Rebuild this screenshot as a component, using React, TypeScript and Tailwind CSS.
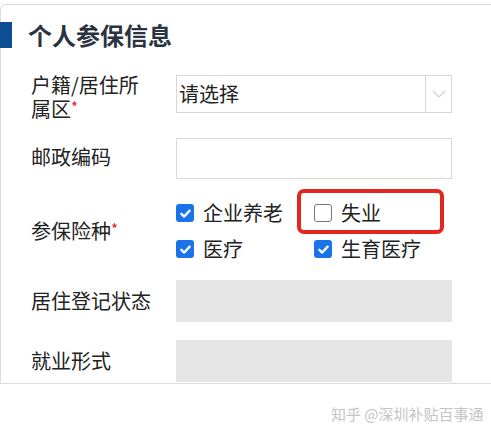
import React from "react";

const font = { fontFamily: '"Noto Sans CJK SC", "Noto Sans", sans-serif' };

const insurance = [
  { label: "企业养老", checked: true },
  { label: "失业", checked: false },
  { label: "医疗", checked: true },
  { label: "生育医疗", checked: true },
];

function Check({ checked }: { checked: boolean }) {
  if (!checked) {
    return <span className="w-[18px] h-[18px] rounded-[3px] border border-[#767676] bg-white shrink-0" />;
  }
  return (
    <span className="w-[18px] h-[18px] rounded-[3px] bg-[#1a73e8] flex items-center justify-center shrink-0">
      <svg width="13" height="13" viewBox="0 0 12 12" fill="none">
        <path d="M2.2 6.3 L4.8 8.8 L9.8 3.4" stroke="white" strokeWidth="2.2" strokeLinecap="round" strokeLinejoin="round" />
      </svg>
    </span>
  );
}

function Req() {
  return <span className="text-[#e02020] text-[15px] leading-[15px] self-start mt-[2px]">*</span>;
}

export default function App() {
  return (
    <div className="relative w-[491px] h-[438px] bg-white overflow-hidden text-[#222]" style={font}>
      <div className="mt-[4px] ml-0 w-[520px] border-l border-t border-b border-[#dcdcdc] rounded-tl-[6px] pb-[1px]">
        {/* title */}
        <div className="flex items-center mt-[17px] h-[26px]">
          <div className="w-[12px] h-[26px] bg-[#0d4d94] -ml-px" />
          <h2 className="ml-[16px] text-[24px] leading-[26px] font-bold text-[#2b3340]">个人参保信息</h2>
        </div>

        <div className="flex flex-col text-[20px]">
          {/* row 1 */}
          <div className="flex items-start mt-[25px]">
            <div className="w-[175px] pl-[30px] leading-[24px] flex flex-col">
              <span>户籍/居住所</span>
              <span className="flex">
                <span>属区</span>
                <Req />
              </span>
            </div>
            <div className="mt-[2px] w-[276px] h-[38px] border border-[#d8d8d8] flex items-stretch">
              <div className="flex-1 flex items-center pl-[2px] text-[20px]">请选择</div>
              <div className="w-[26px] border-l border-[#d8d8d8] flex items-center justify-center">
                <svg width="14" height="8" viewBox="0 0 14 8" fill="none">
                  <path d="M1 1 L7 7 L13 1" stroke="#cfcfcf" strokeWidth="1.2" />
                </svg>
              </div>
            </div>
          </div>

          {/* row 2 */}
          <div className="flex items-center mt-[17px]">
            <div className="w-[175px] pl-[30px] leading-[24px] -mt-[4px]">邮政编码</div>
            <div className="w-[276px] h-[41px] border border-[#d8d8d8]" />
          </div>

          {/* row 3 */}
          <div className="flex items-center mt-[20px]">
            <div className="w-[175px] pl-[30px] leading-[24px] flex">
              <span>参保险种</span>
              <Req />
            </div>
            <div className="grid grid-cols-[138px_138px] gap-y-[8px]">
              {insurance.map((item) => (
                <label key={item.label} className="flex items-center gap-[9px] h-[28px] leading-[28px]">
                  <Check checked={item.checked} />
                  <span>{item.label}</span>
                </label>
              ))}
            </div>
          </div>

          {/* row 4 */}
          <div className="flex items-center mt-[17px]">
            <div className="w-[175px] pl-[30px] leading-[24px]">居住登记状态</div>
            <div className="w-[276px] h-[42px] bg-[#e5e5e5]" />
          </div>

          {/* row 5 */}
          <div className="flex items-center mt-[18px]">
            <div className="w-[175px] pl-[30px] leading-[24px]">就业形式</div>
            <div className="w-[276px] h-[42px] bg-[#e5e5e5]" />
          </div>
        </div>
      </div>

      {/* annotation box */}
      <div className="absolute left-[297px] top-[189px] w-[147px] h-[45px] border-[4px] border-[#e3261e] rounded-[7px]" />

      {/* watermark */}
      <div className="absolute left-[331px] top-[404px] text-[15px] leading-[20px] text-[#c4c4c4] whitespace-nowrap">
        知乎 @深圳补贴百事通
      </div>
    </div>
  );
}
